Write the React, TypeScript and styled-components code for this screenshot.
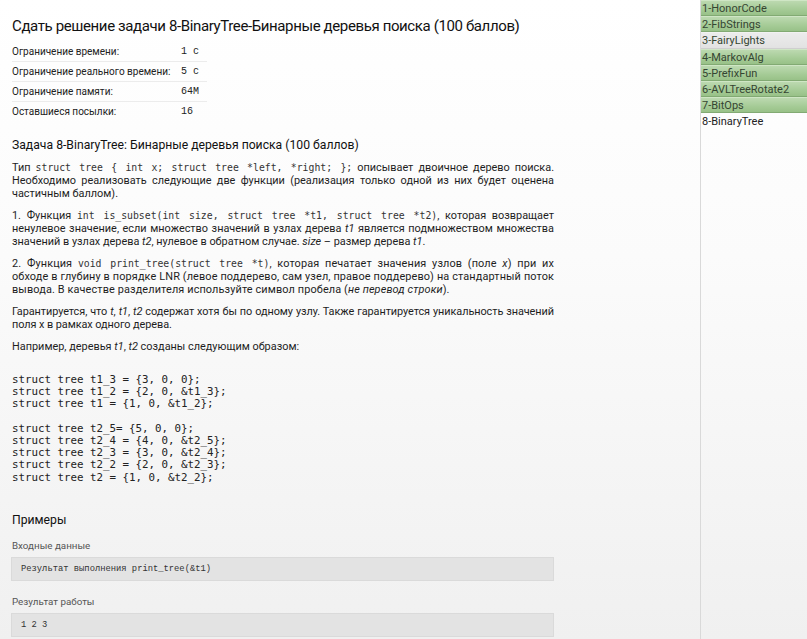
import React from "react";
import styled, { createGlobalStyle } from "styled-components";

const Global = createGlobalStyle`
  html, body { margin: 0; padding: 0; }
  body {
    font-family: Roboto, "Noto Sans", sans-serif;
    color: #222;
    background: #fff;
  }
`;

const Page = styled.div`
  display: grid;
  grid-template-columns: 700px 1px 1fr;
  width: 807px;
  height: 639px;
  overflow: hidden;
  background: linear-gradient(#ffffff 0%, #fbfbfb 40%, #f0f0f0 100%);
`;

const Main = styled.main`
  padding: 16px 0 0 12px;
`;

const Body = styled.div`
  width: 542px;
`;

const Divider = styled.div`
  background: #d9d9d9;
`;

const Title = styled.h1`
  margin: 0;
  font-size: 15px;
  letter-spacing: -0.38px;
  line-height: 20px;
  font-weight: 400;
  color: #111;
  white-space: nowrap;
`;

const Limits = styled.div`
  margin-top: 6px;
  width: 195px;
  display: grid;
  grid-template-columns: 169px 1fr;
`;

const Cell = styled.div<{ $last?: boolean; $mono?: boolean }>`
  height: 19px;
  line-height: 20px;
  border-bottom: 1px solid ${(p) => (p.$last ? "transparent" : "#ececec")};
  font-size: 10px;
  font-family: ${(p) =>
    p.$mono ? '"Liberation Mono", "DejaVu Sans Mono", monospace' : "inherit"};
  color: #222;
  white-space: nowrap;
`;

const H2 = styled.h2`
  margin: 14px 0 0;
  font-size: 12.2px;
  line-height: 18px;
  font-weight: 400;
  color: #111;
`;

const P = styled.p<{ $top?: number; $track?: number }>`
  margin: ${(p) => p.$top ?? 9}px 0 0;
  font-size: 10.9px;
  line-height: 13px;
  letter-spacing: ${(p) => p.$track ?? 0}px;
  text-align: justify;
  color: #1e1e1e;
`;

const Code = styled.code`
  font-family: "DejaVu Sans Mono", "Liberation Mono", monospace;
  font-size: 9.8px;
  letter-spacing: 0;
  color: #333;
`;

const Pre = styled.pre`
  margin: 21px 0 0;
  font-family: "DejaVu Sans Mono", "Liberation Mono", monospace;
  font-size: 10.8px;
  line-height: 12.2px;
  color: #222;
`;

const H3 = styled.h3`
  margin: 27px 0 0;
  font-size: 12.2px;
  line-height: 18px;
  font-weight: 400;
  color: #111;
`;

const Label = styled.div<{ $top: number }>`
  margin-top: ${(p) => p.$top}px;
  font-size: 9.8px;
  line-height: 14px;
  color: #555;
`;

const Sample = styled.div`
  margin-top: 4px;
  margin-left: -1px;
  height: 24px;
  box-sizing: border-box;
  padding-left: 9px;
  display: flex;
  align-items: center;
  background: #e3e3e3;
  border: 1px solid #dadada;
  font-family: "Liberation Mono", "Courier New", monospace;
  font-size: 8.8px;
  color: #333;
  white-space: pre;
`;

const Side = styled.nav`
  display: flex;
  flex-direction: column;
`;

const Item = styled.div<{ $kind: "ok" | "gray" | "plain" }>`
  height: 16.2px;
  box-sizing: border-box;
  padding-left: 1px;
  font-size: 11px;
  line-height: 15px;
  color: ${(p) => (p.$kind === "plain" ? "#222" : "#354532")};
  white-space: nowrap;
  overflow: hidden;
  background: ${(p) =>
    p.$kind === "ok"
      ? "linear-gradient(#bcd9b0, #a5cb96 60%, #98c188)"
      : p.$kind === "gray"
      ? "linear-gradient(#ececec, #e2e2e2)"
      : "transparent"};
  border-top: 1px solid
    ${(p) => (p.$kind === "ok" ? "#cfe6c5" : p.$kind === "gray" ? "#f2f2f2" : "transparent")};
  border-bottom: 1px solid
    ${(p) => (p.$kind === "ok" ? "#82aa73" : p.$kind === "gray" ? "#cfcfcf" : "transparent")};
`;

const items: { name: string; kind: "ok" | "gray" | "plain" }[] = [
  { name: "1-HonorCode", kind: "ok" },
  { name: "2-FibStrings", kind: "ok" },
  { name: "3-FairyLights", kind: "gray" },
  { name: "4-MarkovAlg", kind: "ok" },
  { name: "5-PrefixFun", kind: "ok" },
  { name: "6-AVLTreeRotate2", kind: "ok" },
  { name: "7-BitOps", kind: "ok" },
  { name: "8-BinaryTree", kind: "plain" },
];

const limits: [string, string][] = [
  ["Ограничение времени:", "1 с"],
  ["Ограничение реального времени:", "5 с"],
  ["Ограничение памяти:", "64M"],
  ["Оставшиеся посылки:", "16"],
];

const code = `struct tree t1_3 = {3, 0, 0};
struct tree t1_2 = {2, 0, &t1_3};
struct tree t1 = {1, 0, &t1_2};

struct tree t2_5= {5, 0, 0};
struct tree t2_4 = {4, 0, &t2_5};
struct tree t2_3 = {3, 0, &t2_4};
struct tree t2_2 = {2, 0, &t2_3};
struct tree t2 = {1, 0, &t2_2};`;

export default function App() {
  return (
    <>
      <Global />
      <Page>
        <Main>
          <Title>Сдать решение задачи 8-BinaryTree-Бинарные деревья поиска (100 баллов)</Title>
          <Limits>
            {limits.map(([k, v], i) => (
              <React.Fragment key={k}>
                <Cell $last={i === limits.length - 1}>{k}</Cell>
                <Cell $last={i === limits.length - 1} $mono>
                  {v}
                </Cell>
              </React.Fragment>
            ))}
          </Limits>
          <Body>
            <H2>Задача 8-BinaryTree: Бинарные деревья поиска (100 баллов)</H2>
            <P $top={7}>
              Тип <Code>struct tree {"{"} int x; struct tree *left, *right; {"}"};</Code>{" "}
              описывает двоичное дерево поиска. Необходимо реализовать следующие две функции
              (реализация только одной из них будет оценена частичным баллом).
            </P>
            <P>
              1. Функция <Code>int is_subset(int size, struct tree *t1, struct tree *t2)</Code>,
              которая возвращает ненулевое значение, если множество значений в узлах дерева{" "}
              <i>t1</i> является подмножеством множества значений в узлах дерева <i>t2</i>,
              нулевое в обратном случае. <i>size</i> – размер дерева <i>t1</i>.
            </P>
            <P $track={0.12}>
              2. Функция <Code>void print_tree(struct tree *t)</Code>, которая печатает значения
              узлов (поле <i>x</i>) при их обходе в глубину в порядке LNR (левое поддерево, сам
              узел, правое поддерево) на стандартный поток вывода. В качестве разделителя
              используйте символ пробела (<i>не перевод строки</i>).
            </P>
            <P $track={-0.07}>
              Гарантируется, что <i>t</i>, <i>t1</i>, <i>t2</i> содержат хотя бы по одному узлу.
              Также гарантируется уникальность значений поля x в рамках одного дерева.
            </P>
            <P>
              Например, деревья <i>t1</i>, <i>t2</i> созданы следующим образом:
            </P>
            <Pre>{code}</Pre>
            <H3>Примеры</H3>
            <Label $top={10}>Входные данные</Label>
            <Sample>Результат выполнения print_tree(&amp;t1)</Sample>
            <Label $top={14}>Результат работы</Label>
            <Sample>1 2 3</Sample>
          </Body>
        </Main>
        <Divider />
        <Side>
          {items.map((it) => (
            <Item key={it.name} $kind={it.kind}>
              {it.name}
            </Item>
          ))}
        </Side>
      </Page>
    </>
  );
}
